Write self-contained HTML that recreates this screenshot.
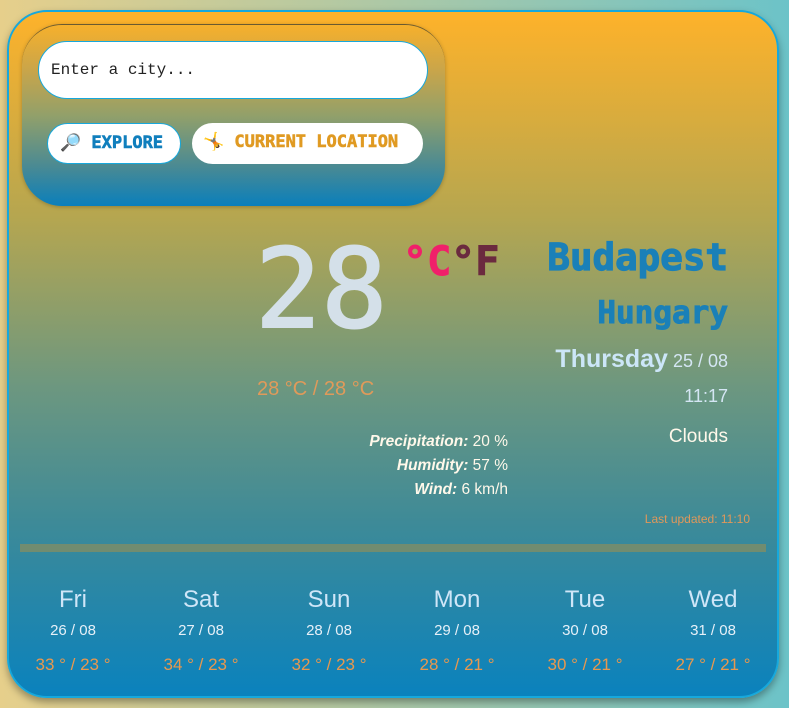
<!DOCTYPE html>
<html><head><meta charset="utf-8"><style>
*{box-sizing:border-box;margin:0;padding:0}
body{width:789px;height:708px;overflow:hidden;background:linear-gradient(90deg,#e6cf8b,#b8c9a0 40%,#6cc3c8);font-family:"Liberation Sans",sans-serif;position:relative}
.card{position:absolute;left:7px;top:10px;width:772px;height:688px;border:2px solid #16a8dc;border-radius:40px;background:linear-gradient(180deg,#feb22a 0%,#b5a650 30%,#6c9780 55%,#3d8a98 75%,#0a82bd 100%);box-shadow:0 4px 8px rgba(0,0,0,.35);overflow:hidden}
.search{position:absolute;left:13px;top:12px;width:423px;height:182px;border-radius:40px;background:linear-gradient(180deg,#f6b02c 0%,#c9a54a 25%,#92a06a 50%,#4a8a93 78%,#0a7fbb 100%);border-top:1px solid #6a5a30;box-shadow:0 1px 4px rgba(0,0,0,.25)}
.inp{position:absolute;left:16px;top:16px;width:390px;height:58px;background:#fff;border:1.5px solid #17a8dc;border-radius:29px;font-family:"Liberation Mono",monospace;font-size:16px;color:#222;padding:19px 0 0 12px}
.btn{position:absolute;top:98px;height:41px;background:#fff;border-radius:21px;font-family:"DejaVu Sans Mono",monospace;font-weight:bold;font-size:17px;padding-top:9px;white-space:nowrap;-webkit-text-stroke:0.6px currentColor}
.b1{left:25px;width:134px;border:1.5px solid #17a8dc;color:#107fbd;padding-left:12px}
.b2{left:170px;width:231px;color:#e09a22;padding-left:11px}
.abs{position:absolute;white-space:nowrap}
.fc div div:first-child{font-size:24px;color:#cfe6f8}
</style></head><body>
<div class="card">
 <div class="search">
  <div class="inp">Enter a city...</div>
  <div class="btn b1">🔎 EXPLORE</div>
  <div class="btn b2">🤸 CURRENT LOCATION</div>
 </div>
 <div class="abs" style="left:246px;top:222px;font-family:'DejaVu Sans Mono',monospace;font-size:110px;color:#d4e0e9;line-height:1;-webkit-text-stroke:2px #d4e0e9">28</div>
 <div class="abs" style="left:394px;top:230px;font-family:'DejaVu Sans Mono',monospace;font-weight:bold;font-size:40px;line-height:1;-webkit-text-stroke:1px currentColor"><span style="color:#f0206a">°C</span><span style="color:#6b2a3f">°F</span></div>
 <div class="abs" style="right:49px;top:223px;font-family:'DejaVu Sans Mono',monospace;font-weight:bold;font-size:37.5px;color:#1a80b8;-webkit-text-stroke:1.2px #1a80b8">Budapest</div>
 <div class="abs" style="right:49px;top:283px;font-family:'DejaVu Sans Mono',monospace;font-weight:bold;font-size:31px;color:#1a80b8;-webkit-text-stroke:1px #1a80b8">Hungary</div>
 <div class="abs" style="right:49px;top:333px;font-size:18px;color:#d4e6f4"><b style="font-size:25px;color:#cce6f8">Thursday</b> 25 / 08</div>
 <div class="abs" style="right:49px;top:374px;font-size:18px;color:#d4e6f4">11:17</div>
 <div class="abs" style="right:49px;top:414px;font-size:19px;color:#fff8ea">Clouds</div>
 <div class="abs" style="left:248px;top:366px;font-size:20px;color:#e09a5a">28 °C / 28 °C</div>
 <div class="abs" style="right:269px;top:418px;font-size:15.5px;color:#fff8ea;text-align:right;line-height:24px"><b><i>Precipitation:</i></b> 20 %<br><b><i>Humidity:</i></b> 57 %<br><b><i>Wind:</i></b> 6 km/h</div>
 <div class="abs" style="right:27px;top:500px;font-size:12px;color:#e0985a">Last updated: 11:10</div>
 <div class="abs" style="left:11px;top:532px;width:746px;height:8px;background:#718c70"></div>
 <div class="abs fc" style="left:0;top:574px;width:768px;display:flex;text-align:center">
  <div style="flex:1"><div>Fri</div><div style="font-size:15px;color:#e6f0f8;margin-top:8px">26 / 08</div><div style="font-size:17px;color:#e8984e;margin-top:16px">33 ° / 23 °</div></div>
  <div style="flex:1"><div>Sat</div><div style="font-size:15px;color:#e6f0f8;margin-top:8px">27 / 08</div><div style="font-size:17px;color:#e8984e;margin-top:16px">34 ° / 23 °</div></div>
  <div style="flex:1"><div>Sun</div><div style="font-size:15px;color:#e6f0f8;margin-top:8px">28 / 08</div><div style="font-size:17px;color:#e8984e;margin-top:16px">32 ° / 23 °</div></div>
  <div style="flex:1"><div>Mon</div><div style="font-size:15px;color:#e6f0f8;margin-top:8px">29 / 08</div><div style="font-size:17px;color:#e8984e;margin-top:16px">28 ° / 21 °</div></div>
  <div style="flex:1"><div>Tue</div><div style="font-size:15px;color:#e6f0f8;margin-top:8px">30 / 08</div><div style="font-size:17px;color:#e8984e;margin-top:16px">30 ° / 21 °</div></div>
  <div style="flex:1"><div>Wed</div><div style="font-size:15px;color:#e6f0f8;margin-top:8px">31 / 08</div><div style="font-size:17px;color:#e8984e;margin-top:16px">27 ° / 21 °</div></div>
 </div>
</div>
</body></html>
